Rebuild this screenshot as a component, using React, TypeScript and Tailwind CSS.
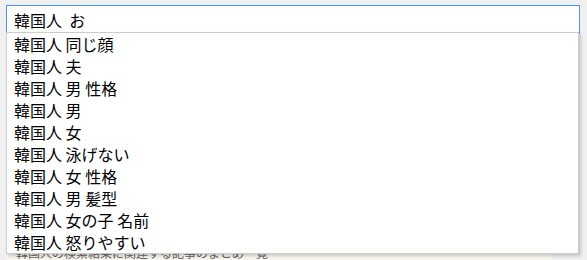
import React from 'react';

const suggestions = [
  '韓国人 同じ顔',
  '韓国人 夫',
  '韓国人 男 性格',
  '韓国人 男',
  '韓国人 女',
  '韓国人 泳げない',
  '韓国人 女 性格',
  '韓国人 男 髪型',
  '韓国人 女の子 名前',
  '韓国人 怒りやすい',
];

const font = { fontFamily: '"Noto Sans CJK JP", "Noto Sans", sans-serif' };

export default function App() {
  return (
    <div className="relative w-[587px] h-[260px] overflow-hidden bg-[#f0f0f0]" style={font}>
      {/* Search box */}
      <div className="pt-[5px] pl-[6px]">
        <div className="w-[574px] h-[29px] bg-white border border-[#4d90fe] flex items-center pl-[7px] text-[16px] text-black leading-none whitespace-pre">
          韓国人  お
        </div>
      </div>

      {/* Page content peeking out below the dropdown */}
      <div className="mt-[211px] ml-[6px] w-[546px] h-[15px] bg-[#f8f4ee] pl-[10px] text-[12px] leading-[15px] text-[#666] whitespace-nowrap overflow-hidden">
        韓国人の検索結果に関連する記事のまとめ一覧
      </div>

      {/* Suggestions dropdown */}
      <div className="absolute top-[32px] left-[6px] w-[573px] bg-white border border-[#cccccc] shadow-[2px_2px_3px_rgba(0,0,0,0.18)]">
        {suggestions.map((s) => (
          <div key={s} className="h-[22px] flex items-center pl-[7px] text-[16px] leading-none text-black">
            {s}
          </div>
        ))}
      </div>
    </div>
  );
}
